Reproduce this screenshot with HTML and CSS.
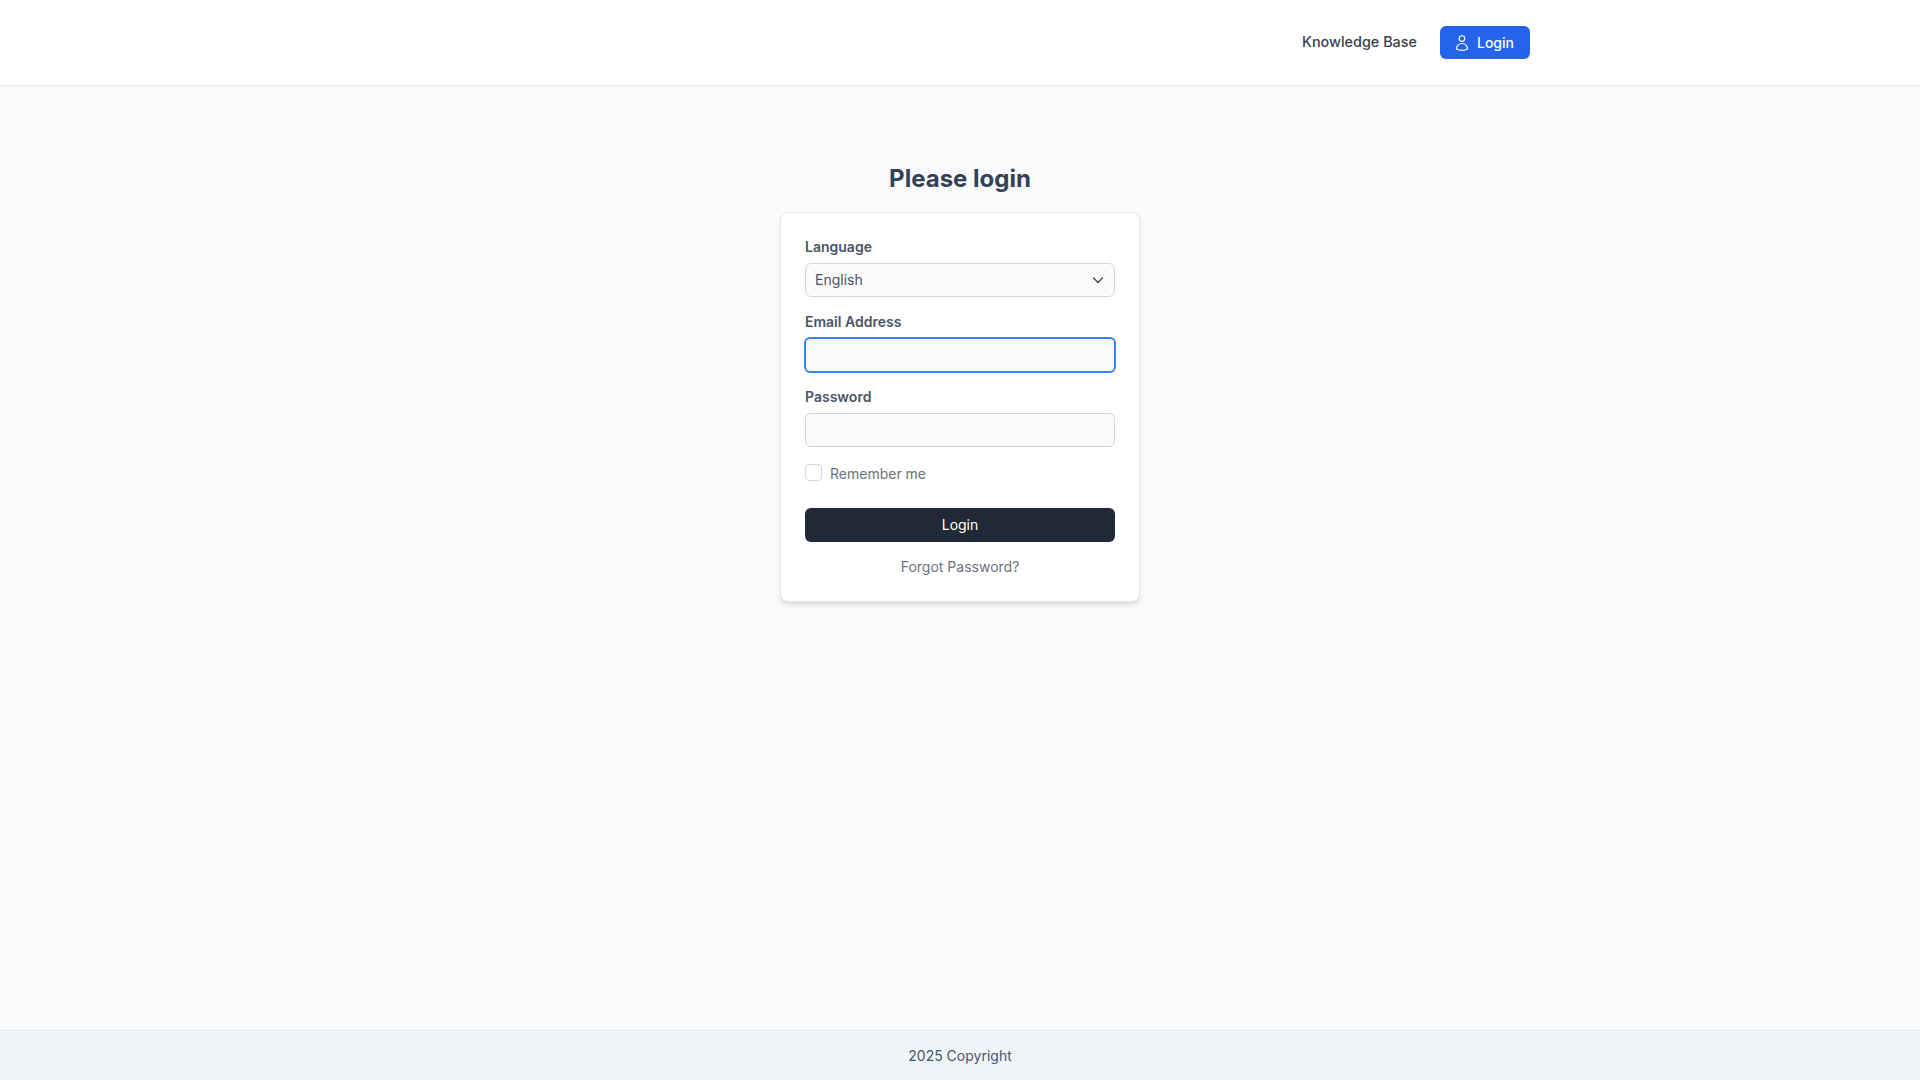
FILE: index.html
```html
<!DOCTYPE html>
<html lang="en">
<head>
<meta charset="utf-8">
<title>Please login</title>
<link rel="stylesheet" href="styles.css">
</head>
<body>
<header class="topbar">
  <nav class="topnav">
    <a class="navlink" href="#">Knowledge Base</a>
    <a class="navbtn" href="#">
      <svg class="usericon" viewBox="0 0 24 24" fill="none" stroke="currentColor" stroke-width="1.5" stroke-linecap="round" stroke-linejoin="round"><path d="M15.75 6a3.75 3.75 0 1 1-7.5 0 3.75 3.75 0 0 1 7.5 0Z"/><path d="M4.5 20.12a7.5 7.5 0 0 1 15 0A17.93 17.93 0 0 1 12 21.75c-2.68 0-5.22-.58-7.5-1.63Z"/></svg>
      Login
    </a>
  </nav>
</header>
<main class="main">
  <h1 class="title">Please login</h1>
  <form class="card">
    <div class="field">
      <label class="label">Language</label>
      <div class="control select">
        <span>English</span>
        <svg class="chevron" viewBox="0 0 12 12" fill="none" stroke="currentColor" stroke-width="1.2" stroke-linecap="round" stroke-linejoin="round"><path d="M1.500 4l4.500 4.500L10.500 4"/></svg>
      </div>
    </div>
    <div class="field">
      <label class="label">Email Address</label>
      <div class="control focused"></div>
    </div>
    <div class="field">
      <label class="label">Password</label>
      <div class="control"></div>
    </div>
    <div class="remember">
      <span class="checkbox"></span>
      <span class="remember-text">Remember me</span>
    </div>
    <button class="submit" type="button">Login</button>
    <a class="forgot" href="#">Forgot Password?</a>
  </form>
</main>
<footer class="footer">2025 Copyright</footer>
</body>
</html>
```
FILE: styles.css
```css
* { box-sizing: border-box; }
html, body { height: 100%; }
body {
  margin: 0;
  display: flex;
  flex-direction: column;
  min-height: 1080px;
  background: #f9fafb;
  font-family: Inter, "Liberation Sans", sans-serif;
  font-size: 14px;
  line-height: 20px;
  color: #374151;
}
a { text-decoration: none; }
.topbar {
  height: 86px;
  flex: none;
  background: #fff;
  border-bottom: 1px solid #e5e7eb;
  padding: 26px 390px 0 0;
}
.topnav {
  display: flex;
  justify-content: flex-end;
  align-items: flex-start;
  gap: 23px;
}
.navlink {
  color: #374151;
  font-size: 14.4px;
  font-weight: 500;
  line-height: 32px;
}
.navbtn {
  display: flex;
  align-items: center;
  gap: 6px;
  width: 90px;
  height: 33px;
  padding-left: 13px;
  background: #2563eb;
  border-radius: 6px;
  color: #fff;
  font-weight: 500;
}
.usericon { width: 18px; height: 18px; }
.main {
  flex: 1;
  display: flex;
  flex-direction: column;
  align-items: center;
  padding-top: 77px;
}
.title {
  margin: 0 0 17px;
  font-size: 24px;
  line-height: 32px;
  font-weight: 700;
  color: #334155;
}
.card {
  width: 360px;
  height: 390px;
  background: #fff;
  border: 1px solid #e5e7eb;
  border-radius: 8px;
  box-shadow: 0 4px 6px -1px rgba(0,0,0,.1), 0 2px 4px -2px rgba(0,0,0,.1);
  padding: 24px;
  display: flex;
  flex-direction: column;
}
.field { margin-bottom: 15px; }
.label {
  display: block;
  margin-bottom: 6px;
  font-weight: 600;
  color: #4b5563;
}
.control {
  height: 34px;
  background: #fafafa;
  border: 1px solid #d1d5db;
  border-radius: 6px;
}
.select {
  display: flex;
  align-items: center;
  justify-content: space-between;
  padding: 0 10px 0 9px;
  color: #4b5563;
}
.chevron { width: 12px; height: 12px; color: #374151; }
.focused {
  border: 2px solid #3b82f6;
  margin: -1px;
  height: 36px;
}
.remember {
  display: flex;
  align-items: center;
  gap: 8px;
  margin-top: 2px;
  height: 20px;
}
.checkbox {
  width: 17px;
  height: 17px;
  background: #fff;
  border: 1px solid #d1d5db;
  border-radius: 4px;
  margin-top: -4px;
}
.remember-text { color: #6b7280; }
.submit {
  margin-top: 24px;
  height: 35px;
  background: #1f2937;
  border: 0;
  border-radius: 6px;
  color: #fff;
  font: 400 14px/20px Inter, "Liberation Sans", sans-serif;
}
.forgot {
  margin-top: 15px;
  text-align: center;
  color: #6b7280;
}
.footer {
  height: 50px;
  flex: none;
  background: #f1f5f9;
  border-top: 1px solid #e2e8f0;
  display: flex;
  align-items: center;
  justify-content: center;
  color: #475569;
}
```
